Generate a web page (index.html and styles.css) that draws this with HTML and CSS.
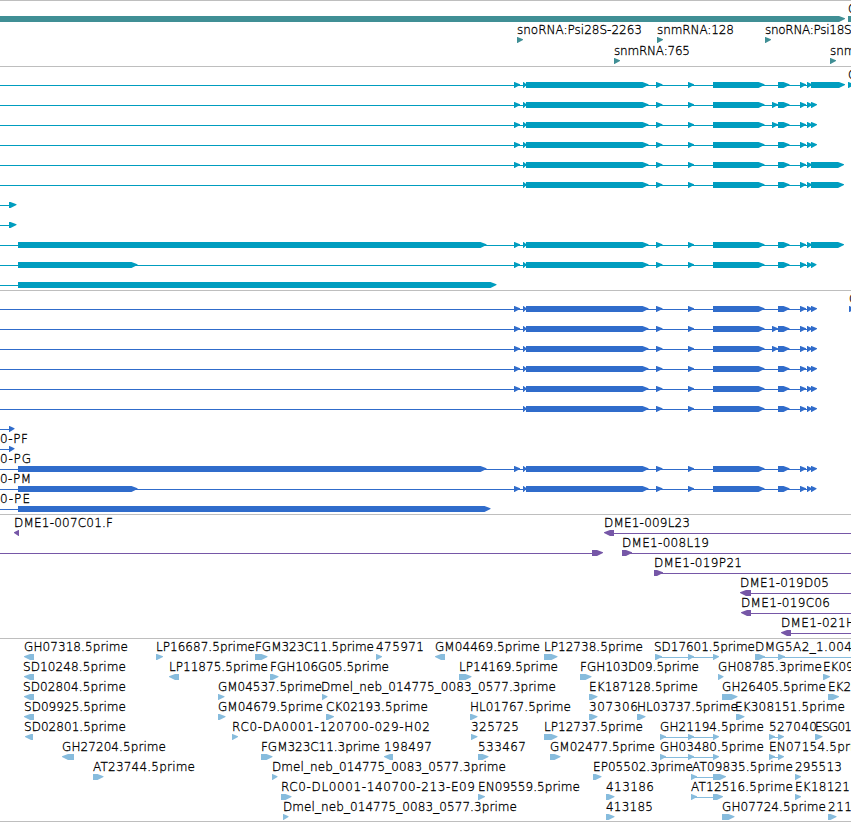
FILE: index.html
```html
<!DOCTYPE html>
<html lang="en">
<head>
<meta charset="utf-8">
<title>Genome browser</title>
<link rel="stylesheet" href="styles.css">
</head>
<body>
<main class="browser">
<section class="track track-gene"></section>
<section class="track track-transcript"></section>
<section class="track track-protein"></section>
<section class="track track-bac"></section>
<section class="track track-est"></section>
</main>
<script src="tracks.js"></script>
</body>
</html>
```
FILE: styles.css
```css
body {
  margin: 0;
  background: #fff;
}

.browser {
  display: flex;
  flex-direction: column;
  width: 851px;
  height: 821px;
  overflow: hidden;
  border-bottom: 1px solid #bebebe;
}

.track {
  flex: none;
  box-sizing: border-box;
  border-top: 1px solid #bebebe;
  overflow: hidden;
}

.track svg {
  display: block;
}

.track text {
  font-family: "DejaVu Sans", sans-serif;
  font-size: 12px;
  font-weight: 200;
  fill: #000;
  stroke: #000;
  stroke-width: 0.3px;
}

.track-gene { height: 66px; color: #408f95; }
.track-transcript { height: 224px; color: #009dbf; }
.track-protein { height: 224px; color: #306ccb; }
.track-bac { height: 124px; color: #7657a7; }
.track-est { height: 183px; color: #87bcdd; }
```
FILE: tracks.js
```js
// Each track is drawn in page coordinates; viewBox places its own slice.
function draw(name, top, height, parts) {
  document.querySelector('.track-' + name).innerHTML =
    `<svg width="851" height="${height}" viewBox="0 ${top} 851 ${height}">${parts.join('')}</svg>`;
}
const line = (a, b, y) => `<rect fill="currentColor" x="${a}" y="${y}" width="${b - a}" height="1"/>`;
const box = (a, b, y) => `<rect fill="currentColor" x="${a}" y="${y - 3}" width="${b - a}" height="6"/>`;
function right(a, b, y) {
  const n = Math.max(a + .5, b - 6);
  return `<path fill="currentColor" d="M${a} ${y - 3}H${n}L${b} ${y - .7}V${y}L${n} ${y + 3}H${a}Z"/>`;
}
function left(a, b, y) {
  const n = Math.min(b - .5, a + 6);
  return `<path fill="currentColor" d="M${b} ${y - 3}H${n}L${a} ${y - .7}V${y}L${n} ${y + 3}H${b}Z"/>`;
}
const label = (s, x, end, y) =>
  `<text x="${x}" y="${y}"${end ? ` textLength="${end - x}"` : ''}>${s}</text>`;

draw('gene', 1, 65, [
  right(-5, 845, 19), box(848, 852, 19), label('CG', 848, 0, 13),
  label('snoRNA:Psi28S-2263', 517, 642, 34), right(517, 523, 40),
  label('snmRNA:128', 657, 734, 34), right(657, 663, 40),
  label('snoRNA:Psi18S-1', 765, 863, 34), right(765, 771, 40),
  label('snmRNA:765', 614, 690, 55), right(614, 620, 61),
  label('snmRNA', 830, 0, 55), right(830, 836, 61)
]);

// Exons shared by every spliced form, with an optional extra one at 772.
function spliced(y, first, extra, longEnd, end) {
  const p = [line(-1, longEnd ? 840 : 812, y)];
  if (first) p.push(right(514, 520, y));
  p.push(right(523, 526.5, y), right(526, 648.5, y), right(656, 662.5, y), right(688, 694, y),
    right(713, 764.5, y), right(778, 789.5, y), right(800, 806, y), right(807, 812, y));
  if (extra) p.push(right(772, 778, y));
  p.push(right(811, end, y));
  return p.join('');
}
function isoforms(y0, protein) {
  const p = [];
  for (let i = 0; i < 6; i++) {
    const long = !protein && (i === 0 || i > 3);
    p.push(spliced(y0 + 20 * i, i < 5, i === 1 || i === 2, long, long ? (i ? 844 : 845) : 817));
  }
  const tip = protein ? 14.5 : 16.5;
  for (const i of [6, 7]) p.push(line(-1, 11, y0 + 20 * i), right(9, tip, y0 + 20 * i));
  p.push(spliced(y0 + 160, true, false, !protein, protein ? 817 : 844), right(18, 486.5, y0 + 160));
  p.push(spliced(y0 + 180, true, false, false, 816.5), right(18, 137.5, y0 + 180));
  p.push(line(-1, 18, y0 + 200), right(18, protein ? 490.5 : 496.5, y0 + 200));
  return p;
}
draw('transcript', 67, 223, [...isoforms(85, false), label('CG', 848, 0, 79), right(848, 854, 85)]);
draw('protein', 291, 223, [
  ...isoforms(309, true), label('CG', 849, 0, 303), right(849, 855, 309),
  label('0-PF', 0, 28, 443), label('0-PG', 0, 31, 463),
  label('0-PM', 0, 31, 483), label('0-PE', 0, 30, 503)
]);

draw('bac', 515, 123, [
  label('DME1-007C01.F', 14, 113, 527), left(14, 19, 533),
  label('DME1-009L23', 604, 690, 527), line(610, 851, 533), left(604, 614, 533),
  line(0, 594, 553), right(592, 603, 553),
  label('DME1-008L19', 622, 709, 547), line(626, 851, 553), right(622, 632, 553),
  label('DME1-019P21', 654, 742, 567), line(658, 851, 573), right(654, 663, 573),
  label('DME1-019D05', 740, 829, 587), line(746, 851, 593), left(740, 751, 593),
  label('DME1-019C06', 741, 830, 607), line(746, 851, 613), left(741, 751, 613),
  label('DME1-021H', 781, 855, 627), line(786, 851, 633), left(781, 791, 633)
]);

// [row, name, label start, label end (0 = natural), glyph start, glyph end, 'l' when reversed]
const ests = [
  [0, 'GH07318.5prime', 24, 128, 24, 34, 'l'], [0, 'LP16687.5prime', 156, 255, 156, 163],
  [0, 'FGM323C11.5prime', 255, 374, 255, 267.5], [0, '475971', 376, 424, 376, 382],
  [0, 'GM04469.5prime', 435, 540, 435, 445, 'l'], [0, 'LP12738.5prime', 544, 643, 544, 557.5],
  [0, 'SD17601.5prime', 654, 755, 655, 662], [0, 'DMG5A2_1.004', 755, 852, 755, 765],
  [1, 'SD10248.5prime', 23, 126, 24, 34, 'l'], [1, 'LP11875.5prime', 169, 268, 169, 179, 'l'],
  [1, 'FGH106G05.5prime', 270, 389, 270, 278.5], [1, 'LP14169.5prime', 459, 558, 459, 471.5],
  [1, 'FGH103D09.5prime', 580, 699, 580, 591.5], [1, 'GH08785.3prime', 718, 822, 718, 723.5],
  [1, 'EK09', 823, 0, 823, 830],
  [2, 'SD02804.5prime', 23, 126, 24, 34, 'l'], [2, 'GM04537.5prime', 218, 322, 218, 224.5],
  [2, 'Dmel_neb_014775_0083_0577.3prime', 321, 556, 322, 327.5],
  [2, 'EK187128.5prime', 589, 698, 589, 597.5], [2, 'GH26405.5prime', 722, 826, 722, 737.5],
  [2, 'EK2', 828, 0, 828, 839],
  [3, 'SD09925.5prime', 24, 126, 24, 34, 'l'], [3, 'GM04679.5prime', 218, 323, 218, 225.5],
  [3, 'CK02193.5prime', 326, 428, 326, 334], [3, 'HL01767.5prime', 470, 571, 470, 477.5],
  [3, '307306', 589, 638, 589, 597.5], [3, 'HL03737.5prime', 637, 738, 637, 645.5],
  [3, 'EK308151.5prime', 735, 845, 736, 744.5],
  [4, 'SD02801.5prime', 24, 126, 25, 33, 'l'], [4, 'RC0-DA0001-120700-029-H02', 232, 430, 232, 238],
  [4, '325725', 471, 519, 471, 477.5], [4, 'LP12737.5prime', 544, 643, 544, 557.5],
  [4, 'GH21194.5prime', 660, 764, 660, 666], [4, '527040', 769, 817, 769, 775],
  [4, 'ESG01', 815, 852, 815, 822.5],
  [5, 'GH27204.5prime', 62, 166, 62, 74, 'l'], [5, 'FGM323C11.3prime', 261, 380, 261, 272.5],
  [5, '198497', 384, 432, 384, 393, 'l'], [5, '533467', 478, 526, 478, 488.5],
  [5, 'GM02477.5prime', 550, 655, 550, 560.5], [5, 'GH03480.5prime', 660, 764, 660, 666],
  [5, 'EN07154.5prime', 769, 873, 769, 775],
  [6, 'AT23744.5prime', 93, 195, 93, 103.5], [6, 'Dmel_neb_014775_0083_0577.3prime', 272, 506, 272, 277.5],
  [6, 'EP05502.3prime', 593, 693, 593, 601.5], [6, 'AT09835.5prime', 692, 793, 691, 697],
  [6, '295513', 795, 842, 795, 801],
  [7, 'RC0-DL0001-140700-213-E09', 281, 475, 281, 291.5], [7, 'EN09559.5prime', 478, 580, 478, 485],
  [7, '413186', 606, 654, 606, 614.5], [7, 'AT12516.5prime', 691, 793, 691, 697],
  [7, 'EK18121', 795, 850, 795, 801],
  [8, 'Dmel_neb_014775_0083_0577.3prime', 283, 517, 283, 288.5],
  [8, '413185', 606, 653, 606, 614.5], [8, 'GH07724.5prime', 722, 826, 722, 734.5],
  [8, '211', 828, 852, 828, 836.5]
];
// Later blocks of spliced reads: [row, line start, line end, block start, block end]
const blocks = [
  [0, 659, 714, 688, 694], [0, 659, 714, 713, 719], [0, 762, 851, 778, 785],
  [4, 664, 714, 688, 694], [4, 664, 714, 713, 719], [4, 772, 780, 778, 784],
  [5, 664, 714, 688, 694], [5, 664, 714, 713, 719], [5, 772, 780, 778, 784],
  [6, 695, 714, 713, 726], [7, 695, 714, 713, 723]
];
draw('est', 639, 182, [
  ...ests.map(([r, s, x, e, a, b, d]) => label(s, x, e, 651 + 20 * r) + (d ? left : right)(a, b, 657 + 20 * r)),
  ...blocks.map(([r, a, b, c, d]) => line(a, b, 657 + 20 * r) + right(c, d, 657 + 20 * r))
]);
```
